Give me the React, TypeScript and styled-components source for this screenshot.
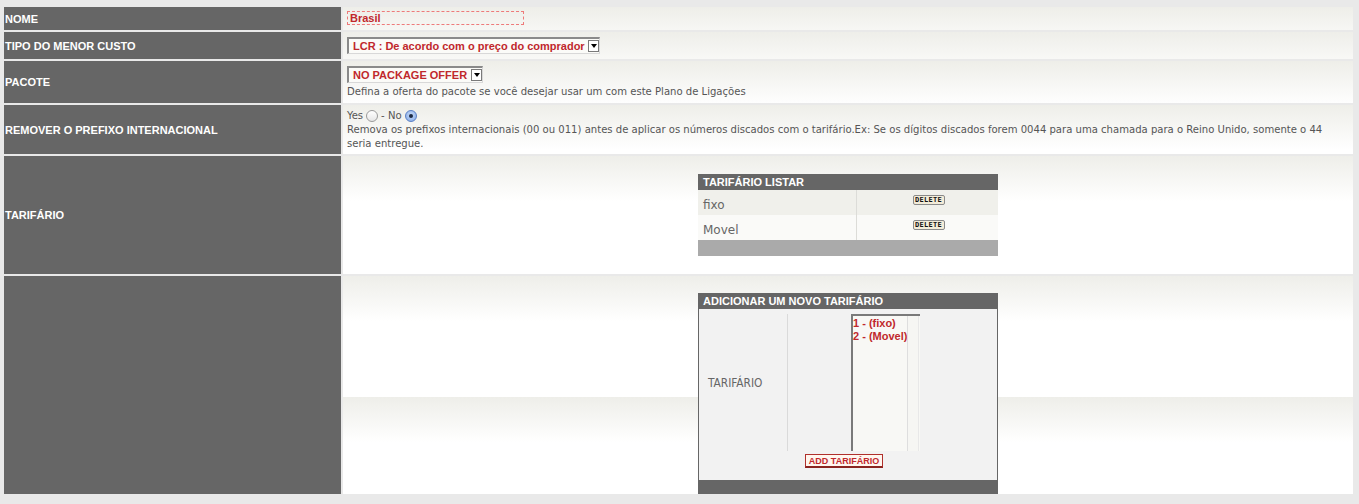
import React from "react";
import styled, { createGlobalStyle } from "styled-components";

const GlobalStyle = createGlobalStyle`
  html, body { margin: 0; padding: 0; background: #e9e9e9; }
  * { box-sizing: border-box; }
`;

const Page = styled.div`
  background: #e9e9e9;
  padding: 7px 6px 10px 4px;
  font-family: "Liberation Sans", Arial, sans-serif;
`;

const FormGrid = styled.div`
  display: grid;
  grid-template-columns: 337px 1010px;
  grid-template-rows: 23px 27px 42px 49px 118px 218px;
  gap: 2px;
`;

const Label = styled.div`
  background: #666666;
  color: #ffffff;
  font: bold 11px "Liberation Sans", Arial, sans-serif;
  text-transform: uppercase;
  display: flex;
  align-items: center;
  padding-left: 1px;
`;

const Value = styled.div<{ $top?: number; $bottom?: number; $align?: string }>`
  background-image: linear-gradient(to bottom, #eeeee9 0px, #ffffff 45px, #ffffff 121px);
  background-size: 100% 121px;
  background-repeat: repeat;
  display: flex;
  flex-direction: column;
  justify-content: ${(p) => p.$align ?? "center"};
  align-items: flex-start;
  padding: ${(p) => p.$top ?? 0}px 4px ${(p) => p.$bottom ?? 0}px 4px;
`;

const TextInput = styled.div`
  width: 177px;
  height: 14px;
  border: 1px dashed #ee7a7a;
  color: #c0282c;
  font: bold 11px "Liberation Sans", Arial, sans-serif;
  line-height: 12px;
  padding-left: 2px;
  background: transparent;
  margin-top: -1px;
`;

const SelectBox = styled.div<{ $w: number }>`
  width: ${(p) => p.$w}px;
  height: 17px;
  display: flex;
  align-items: stretch;
  background: #fbfbf8;
  border-top: 2px solid #8a8a8a;
  border-left: 2px solid #8a8a8a;
  border-right: 1px solid #d8d8d8;
  border-bottom: 1px solid #d8d8d8;
`;

const SelectText = styled.span`
  flex: 1;
  color: #c0282c;
  font: bold 11px "Liberation Sans", Arial, sans-serif;
  line-height: 14px;
  padding-left: 4px;
  white-space: nowrap;
`;

const SelectArrow = styled.span`
  width: 11px;
  margin: 1px 0 1px 0;
  background: #ffffff;
  border: 1px solid #7a7a7a;
  display: flex;
  align-items: center;
  justify-content: center;
  &::after {
    content: "";
    border-left: 3px solid transparent;
    border-right: 3px solid transparent;
    border-top: 4px solid #000;
  }
`;

const Help = styled.div<{ $mt?: number }>`
  font-family: "DejaVu Sans Condensed", "DejaVu Sans", sans-serif;
  font-stretch: condensed;
  font-size: 11.2px;
  line-height: 14px;
  color: #555555;
  margin-top: ${(p) => p.$mt ?? 0}px;
`;

const RadioLine = styled.div`
  display: flex;
  align-items: center;
  gap: 3px;
  font-family: "DejaVu Sans Condensed", "DejaVu Sans", sans-serif;
  font-stretch: condensed;
  font-size: 11.2px;
  line-height: 14px;
  color: #555555;
`;

const Radio = styled.span<{ $checked?: boolean }>`
  width: 12px;
  height: 12px;
  border-radius: 50%;
  display: inline-flex;
  align-items: center;
  justify-content: center;
  border: 1px solid ${(p) => (p.$checked ? "#5a7fc4" : "#9a9a9a")};
  background: ${(p) =>
    p.$checked
      ? "radial-gradient(circle at 50% 40%, #c9dcf7 0%, #7fa6e6 100%)"
      : "linear-gradient(#ffffff, #e6e6e6)"};
  &::after {
    content: "";
    display: ${(p) => (p.$checked ? "block" : "none")};
    width: 4px;
    height: 4px;
    border-radius: 50%;
    background: #1c2a44;
  }
`;

const InnerTable = styled.div`
  width: 300px;
  align-self: center;
  display: flex;
  flex-direction: column;
`;

const InnerHeader = styled.div`
  height: 16px;
  background: #666666;
  color: #ffffff;
  font: bold 11px "Liberation Sans", Arial, sans-serif;
  line-height: 16px;
  padding-left: 5px;
  text-transform: uppercase;
`;

const ListRow = styled.div<{ $alt?: boolean }>`
  display: grid;
  grid-template-columns: 159px 1fr;
  height: 25px;
  background: ${(p) => (p.$alt ? "#fafaf8" : "#f0f0eb")};
`;

const ListName = styled.div`
  border-right: 1px solid #dcdcd8;
  font-family: "DejaVu Sans", Verdana, sans-serif;
  font-size: 12px;
  color: #666666;
  padding: 8px 0 0 5px;
`;

const ListAction = styled.div`
  display: flex;
  justify-content: center;
  align-items: flex-start;
  padding-top: 5px;
`;

const DeleteButton = styled.span`
  height: 10px;
  width: 32px;
  display: inline-flex;
  align-items: center;
  justify-content: center;
  background: #f3ecd8;
  border: 1px solid #8a8a8a;
  border-radius: 2px;
  font: bold 7px "DejaVu Sans Mono", monospace;
  letter-spacing: 0.3px;
  color: #111;
  margin-left: 2px;
`;

const ListFooter = styled.div<{ $h: number; $c: string }>`
  height: ${(p) => p.$h}px;
  background: ${(p) => p.$c};
`;

const AddBody = styled.div`
  height: 171px;
  background: #f2f2f2;
  border-left: 1px solid #666666;
  border-right: 1px solid #666666;
  display: flex;
  flex-direction: column;
  padding-top: 5px;
`;

const AddRow = styled.div`
  display: grid;
  grid-template-columns: 89px 1fr;
  height: 137px;
`;

const AddLabel = styled.div`
  border-right: 1px solid #dadada;
  display: flex;
  align-items: center;
  padding-left: 9px;
  font-family: "DejaVu Sans Condensed", "DejaVu Sans", sans-serif;
  font-stretch: condensed;
  font-size: 11.8px;
  color: #666666;
`;

const AddField = styled.div`
  padding-left: 63px;
`;

const ListBox = styled.div`
  width: 69px;
  height: 137px;
  background: #f8f8f5;
  border-top: 2px solid #7a7a7a;
  border-left: 2px solid #7a7a7a;
  position: relative;
  display: flex;
  flex-direction: column;
  padding-top: 1px;
  &::after {
    content: "";
    position: absolute;
    top: 0;
    bottom: 0;
    right: 1px;
    width: 10px;
    border-left: 1px solid #dedede;
    border-right: 1px solid #e8e8e8;
    background: #f6f6f3;
  }
`;

const Option = styled.span`
  color: #c0282c;
  font: bold 11px "Liberation Sans", Arial, sans-serif;
  line-height: 13px;
  white-space: nowrap;
`;

const ButtonRow = styled.div`
  display: flex;
  justify-content: center;
  padding: 3px 8px 0 0;
`;

const AddButton = styled.span`
  height: 14px;
  padding: 0 3px;
  display: inline-flex;
  align-items: center;
  background: #fff6ef;
  border: 1px solid #b0302c;
  border-bottom: 2px solid #8a2420;
  color: #c0282c;
  font: bold 9px "Liberation Sans", Arial, sans-serif;
`;

export default function App() {
  return (
    <>
      <GlobalStyle />
      <Page>
        <FormGrid>
          <Label>Nome</Label>
          <Value>
            <TextInput>Brasil</TextInput>
          </Value>

          <Label>Tipo do menor custo</Label>
          <Value>
            <SelectBox $w={253}>
              <SelectText>LCR : De acordo com o preço do comprador</SelectText>
              <SelectArrow />
            </SelectBox>
          </Value>

          <Label>Pacote</Label>
          <Value>
            <SelectBox $w={136}>
              <SelectText>NO PACKAGE OFFER</SelectText>
              <SelectArrow />
            </SelectBox>
            <Help $mt={2}>Defina a oferta do pacote se você desejar usar um com este Plano de Ligações</Help>
          </Value>

          <Label>Remover o prefixo internacional</Label>
          <Value>
            <RadioLine>
              Yes <Radio /> - No <Radio $checked />
            </RadioLine>
            <Help>
              Remova os prefixos internacionais (00 ou 011) antes de aplicar os números discados com o
              tarifário.Ex: Se os dígitos discados forem 0044 para uma chamada para o Reino Unido, somente o 44
              seria entregue.
            </Help>
          </Value>

          <Label>Tarifário</Label>
          <Value $align="flex-start" $top={18}>
            <InnerTable>
              <InnerHeader>Tarifário listar</InnerHeader>
              <ListRow>
                <ListName>fixo</ListName>
                <ListAction>
                  <DeleteButton>DELETE</DeleteButton>
                </ListAction>
              </ListRow>
              <ListRow $alt>
                <ListName>Movel</ListName>
                <ListAction>
                  <DeleteButton>DELETE</DeleteButton>
                </ListAction>
              </ListRow>
              <ListFooter $h={16} $c="#aaaaaa" />
            </InnerTable>
          </Value>

          <Label />
          <Value $align="flex-start" $top={17}>
            <InnerTable>
              <InnerHeader>Adicionar um novo tarifário</InnerHeader>
              <AddBody>
                <AddRow>
                  <AddLabel>TARIFÁRIO</AddLabel>
                  <AddField>
                    <ListBox>
                      <Option>1 - (fixo)</Option>
                      <Option>2 - (Movel)</Option>
                    </ListBox>
                  </AddField>
                </AddRow>
                <ButtonRow>
                  <AddButton>ADD TARIFÁRIO</AddButton>
                </ButtonRow>
              </AddBody>
              <ListFooter $h={14} $c="#666666" />
            </InnerTable>
          </Value>
        </FormGrid>
      </Page>
    </>
  );
}
